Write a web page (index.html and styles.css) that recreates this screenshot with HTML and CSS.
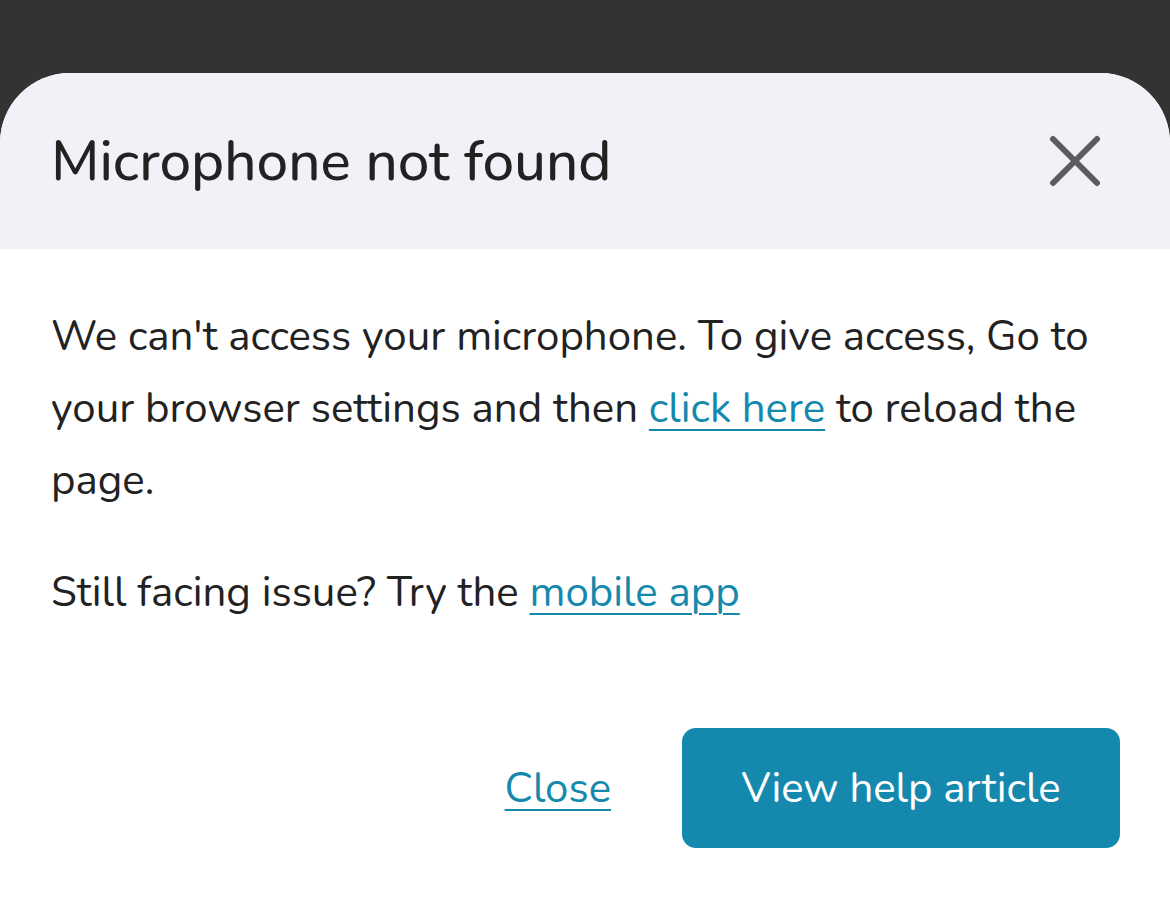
FILE: index.html
```html
<!DOCTYPE html>
<html lang="en">
<head>
<meta charset="utf-8">
<title>Microphone not found</title>
<link rel="stylesheet" href="styles.css">
</head>
<body>
<div class="dialog">
  <div class="dialog-header">
    <h1 class="dialog-title">Microphone not found</h1>
    <button class="icon-close" aria-label="Close">
      <svg width="52" height="52" viewBox="0 0 52 52"><path d="M4 4 L48 48 M48 4 L4 48" stroke="#5c5c5c" stroke-width="6" stroke-linecap="round" fill="none"/></svg>
    </button>
  </div>
  <div class="dialog-body">
    <p class="para">We can't access your microphone. To give access, Go to your browser settings and then <a class="link" href="#">click here</a> to reload the page.</p>
    <p class="para para-second">Still facing issue? Try the <a class="link" href="#">mobile app</a></p>
  </div>
  <div class="dialog-footer">
    <a class="link footer-link" href="#">Close</a>
    <button class="btn-primary">View help article</button>
  </div>
</div>
</body>
</html>
```
FILE: styles.css
```css
html, body {
  margin: 0;
  padding: 0;
  background: #333333;
  height: 100%;
}
body {
  font-family: "Nunito", "Open Sans", "Noto Sans", sans-serif;
  color: #222222;
  overflow: hidden;
}
.dialog {
  margin-top: 73px;
  background: #ffffff;
  border-radius: 70px 70px 0 0;
  overflow: hidden;
  height: 825px;
}
.dialog-header {
  height: 176px;
  background: #f1f2f7;
  display: flex;
  align-items: center;
  justify-content: space-between;
  padding: 0 69px 0 51px;
}
.dialog-title {
  margin: 0;
  font-size: 56.5px;
  font-weight: 500;
  color: #222222;
}
.icon-close {
  background: none;
  border: 0;
  padding: 0;
  display: flex;
}
.dialog-body {
  padding: 52px 51px 0 51px;
}
.para {
  margin: 0;
  font-size: 42px;
  line-height: 72px;
}
.para-second {
  margin-top: 40px;
}
.link {
  color: #1589ad;
  text-decoration: underline;
  text-decoration-thickness: 2px;
  text-underline-offset: 7px;
}
.dialog-footer {
  display: flex;
  justify-content: flex-end;
  align-items: center;
  gap: 71px;
  padding: 99px 50px 0 0;
}
.footer-link {
  font-size: 42px;
}
.btn-primary {
  width: 438px;
  height: 120px;
  background: #1589ad;
  color: #ffffff;
  border: 0;
  border-radius: 14px;
  font-family: inherit;
  font-size: 42px;
}
```
